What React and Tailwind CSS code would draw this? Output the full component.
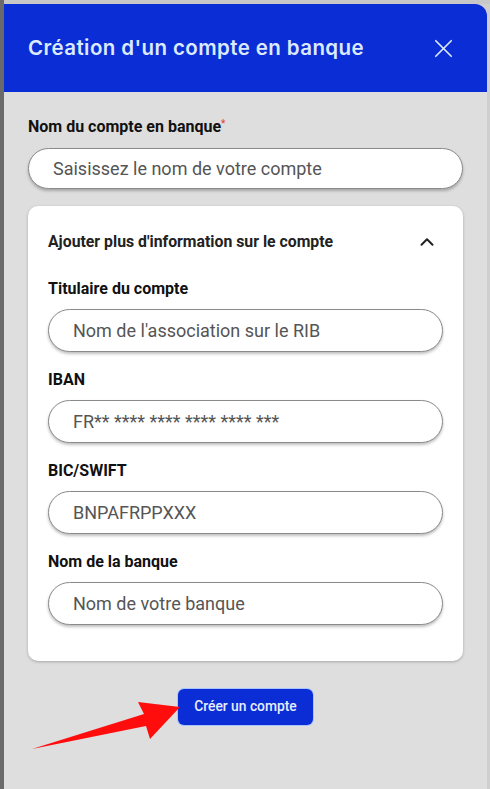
import { X, ChevronUp } from "lucide-react";

function Field({ label, placeholder }) {
  return (
    <div>
      <label className="block text-[16px] font-bold text-[#111] leading-5">{label}</label>
      <div className="mt-[10px] h-[43px] rounded-full bg-white border border-[#8a8a8a] shadow-[0_2px_3px_rgba(0,0,0,0.25)] flex items-center px-6 text-[18px] text-[#555]">
        {placeholder}
      </div>
    </div>
  );
}

export default function App() {
  return (
    <div className="w-[490px] h-[789px] flex bg-[#cfcfcf] overflow-hidden" style={{ fontFamily: "Roboto, sans-serif" }}>
      <div className="w-1 h-full bg-[#6a6a6a]" />
      <div className="flex-1 flex flex-col">
        <div className="h-1 bg-[#c8c8c8]" />
        <div className="w-[483px] flex-1 flex flex-col bg-[#dedede] rounded-tr-xl overflow-hidden">
          <div className="h-[88px] bg-[#0b2dd6] flex items-center justify-between pl-6 pr-[28px]">
            <h1 className="text-[20.5px] font-semibold text-[#dbeafe] tracking-[0.4px]" style={{ fontFamily: "Inter, sans-serif" }}>
              Création d'un compte en banque
            </h1>
            <X size={31} strokeWidth={1.3} className="text-[#dbeafe]" />
          </div>

          <div className="px-6 pt-[25px]">
            <label className="block text-[16px] font-bold text-[#111] leading-5">
              Nom du compte en banque<sup className="text-[#e53935] text-[10px] font-normal">*</sup>
            </label>
            <div className="mt-[11px] h-[41px] rounded-full bg-white border border-[#8a8a8a] shadow-[0_2px_3px_rgba(0,0,0,0.25)] flex items-center px-6 text-[18px] text-[#555]">
              Saisissez le nom de votre compte
            </div>

            <div className="mt-[17px] bg-white rounded-[10px] shadow-[0_1px_3px_rgba(0,0,0,0.25)] px-5 pt-6 pb-9">
              <div className="flex items-center justify-between pr-[5px]">
                <span className="text-[15.8px] font-bold text-[#222]">Ajouter plus d'information sur le compte</span>
                <ChevronUp size={22} strokeWidth={2.2} className="text-[#222]" />
              </div>
              <div className="mt-[25px] flex flex-col gap-[18px]">
                <Field label="Titulaire du compte" placeholder="Nom de l'association sur le RIB" />
                <Field label="IBAN" placeholder="FR** **** **** **** **** ***" />
                <Field label="BIC/SWIFT" placeholder="BNPAFRPPXXX" />
                <Field label="Nom de la banque" placeholder="Nom de votre banque" />
              </div>
            </div>

            <div className="mt-7 flex justify-center relative">
              <button className="h-[36px] px-4 rounded-md bg-[#0b2dd6] text-[#e6eeff] text-[13.8px] font-medium ring-1 ring-[#a9c4ff]">
                Créer un compte
              </button>
              <svg className="absolute left-[2px] top-[8px]" width="170" height="60" viewBox="0 0 170 60">
                <path d="M2 52 L114 17 L108 5 L150 10 L120 42 L116 29 Z" fill="#ff0d0d" />
              </svg>
            </div>
          </div>
        </div>
      </div>
    </div>
  );
}
